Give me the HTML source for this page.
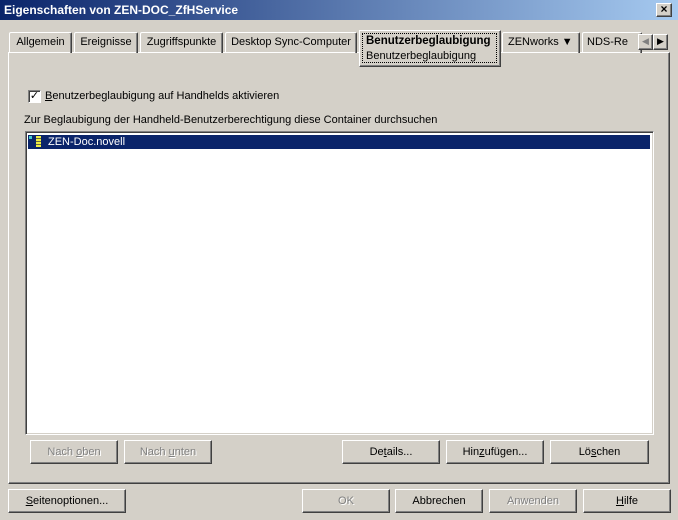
<!DOCTYPE html>
<html><head><style>
body{margin:0;width:678px;height:520px;background:#d4d0c8;font:11px "Liberation Sans",sans-serif;position:relative;overflow:hidden;color:#000}
.a{position:absolute}
.btn{position:absolute;height:24px;box-sizing:border-box;background:#d4d0c8;border:1px solid;border-color:#fff #404040 #404040 #fff;box-shadow:inset -1px -1px 0 #808080;text-align:center;line-height:23px}
.dis{color:#808080;text-shadow:1px 1px 0 #fff}
.tab{position:absolute;top:32px;height:21px;box-sizing:border-box;border:1px solid;border-color:#fff #404040 transparent #fff;border-bottom:none;box-shadow:inset -1px 0 0 #808080;text-align:center;line-height:19px;border-radius:2px 2px 0 0}
u{text-decoration:underline}
</style></head><body>
<div class="a" style="left:0;top:0;width:678px;height:20px;background:linear-gradient(90deg,#0a246a,#a6caf0);"></div>
<div class="a" style="left:4px;top:3px;color:#fff;font-weight:bold;font-size:12px">Eigenschaften von ZEN-DOC_ZfHService</div>
<div class="btn" style="left:656px;top:3px;width:16px;height:14px;line-height:11px;font-size:12px;font-weight:bold">×</div>
<div class="a" style="left:8px;top:52px;width:662px;height:432px;box-sizing:border-box;border:1px solid;border-color:#fff #404040 #404040 #fff;box-shadow:inset -1px -1px 0 #808080"></div>
<div class="tab" style="left:9px;width:63px">Allgemein</div>
<div class="tab" style="left:74px;width:64px">Ereignisse</div>
<div class="tab" style="left:140px;width:83px">Zugriffspunkte</div>
<div class="tab" style="left:225px;width:132px">Desktop Sync-Computer</div>
<div class="tab" style="left:502px;width:78px;text-align:left;padding-left:5px">ZENworks &#9660;</div>
<div class="tab" style="left:582px;width:60px;text-align:left;padding-left:4px;overflow:hidden;white-space:nowrap">NDS-Re</div>
<div class="a" style="left:359px;top:30px;width:142px;height:37px;box-sizing:border-box;background:#d4d0c8;border:1px solid;border-color:#fff #404040 #404040 #fff;box-shadow:inset -1px -1px 0 #808080"></div>
<div class="a" style="left:362px;top:33px;width:135px;height:30px;border:1px dotted #000;box-sizing:border-box"></div>
<div class="a" style="left:366px;top:35px;font-weight:bold;font-size:11.5px">Benutzerbeglaubigung</div>
<div class="a" style="left:366px;top:50px">Benutzerbeglaubigung</div>
<div class="btn" style="left:638px;top:34px;width:15px;height:16px;line-height:13px;color:#808080;font-size:9px">&#9664;</div>
<div class="btn" style="left:653px;top:34px;width:15px;height:16px;line-height:13px;font-size:9px">&#9654;</div>
<div class="a" style="left:28px;top:90px;width:13px;height:13px;box-sizing:border-box;background:#fff;border:1px solid;border-color:#808080 #fff #fff #808080;box-shadow:inset 1px 1px 0 #404040;font-size:11px;line-height:11px;text-align:center">✓</div>
<div class="a" style="left:45px;top:90px"><u>B</u>enutzerbeglaubigung auf Handhelds aktivieren</div>
<div class="a" style="left:24px;top:114px">Zur Beglaubigung der Handheld-Benutzerberechtigung diese Container durchsuchen</div>
<div class="a" style="left:25px;top:131px;width:629px;height:304px;box-sizing:border-box;background:#fff;border:1px solid;border-color:#808080 #fff #fff #808080;box-shadow:inset 1px 1px 0 #404040,inset -1px -1px 0 #d4d0c8"></div>
<div class="a" style="left:28px;top:135px;width:622px;height:14px;background:#0a246a"></div>
<div class="a" style="left:29px;top:136px;width:3px;height:3px;background:#4cc"></div>
<div class="a" style="left:36px;top:136px;width:5px;height:11px;background:repeating-linear-gradient(#ee4 0 2px,#664 2px 3px)"></div>
<div class="a" style="left:48px;top:135px;color:#fff;line-height:14px">ZEN-Doc.novell</div>
<div class="btn dis" style="left:30px;top:440px;width:88px">Nach <u>o</u>ben</div>
<div class="btn dis" style="left:124px;top:440px;width:88px">Nach <u>u</u>nten</div>
<div class="btn" style="left:342px;top:440px;width:98px">De<u>t</u>ails...</div>
<div class="btn" style="left:446px;top:440px;width:98px">Hin<u>z</u>ufügen...</div>
<div class="btn" style="left:550px;top:440px;width:99px">Lö<u>s</u>chen</div>
<div class="btn" style="left:8px;top:489px;width:118px"><u>S</u>eitenoptionen...</div>
<div class="btn dis" style="left:302px;top:489px;width:88px">OK</div>
<div class="btn" style="left:395px;top:489px;width:88px">Abbrechen</div>
<div class="btn dis" style="left:489px;top:489px;width:88px">Anwenden</div>
<div class="btn" style="left:583px;top:489px;width:88px"><u>H</u>ilfe</div>
</body></html>
